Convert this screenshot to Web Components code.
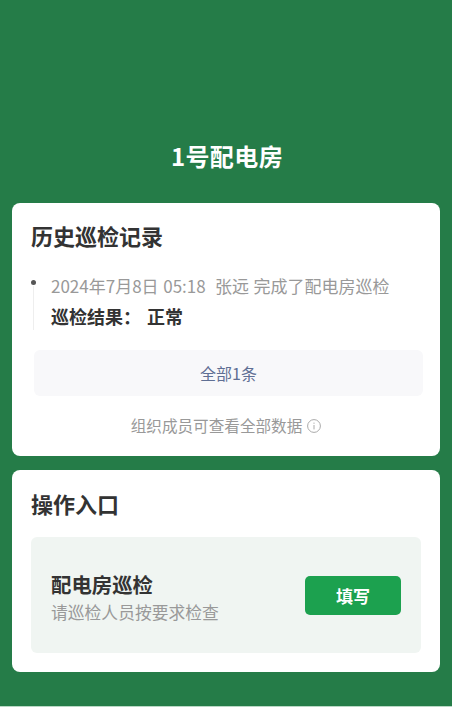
<!DOCTYPE html>
<html lang="zh">
<head>
<meta charset="utf-8">
<title>1号配电房</title>
<style>
  html { background: #fff; }
  body {
    margin: 0;
    font-family: "Noto Sans CJK SC", "Noto Sans", sans-serif;
  }
</style>
</head>
<body>
<room-page heading="1号配电房">
  <info-card heading="历史巡检记录">
    <patrol-record
      meta="2024年7月8日 05:18&nbsp; 张远 完成了配电房巡检"
      label="巡检结果："
      result="正常"></patrol-record>
    <more-button>全部1条</more-button>
    <scope-note>组织成员可查看全部数据</scope-note>
  </info-card>
  <info-card heading="操作入口" compact>
    <action-entry heading="配电房巡检" hint="请巡检人员按要求检查" action="填写"></action-entry>
  </info-card>
</room-page>

<script>
  class RoomPage extends HTMLElement {
    constructor() {
      super();
      this.shadow = this.attachShadow({ mode: "open" });
      this.shadow.innerHTML = `<style>
        :host { display: block; height: 706px; box-sizing: border-box; background: #257c48; padding: 0 12px; overflow: hidden; border-bottom: 1px solid #b9d8c5; height: 707px; }
        h1 { margin: 0; padding: 140px 0 0 2px; height: 63px; font-size: 24px; line-height: 32px; font-weight: 700; letter-spacing: .4px; color: #fff; text-align: center; }
        .cards { display: flex; flex-direction: column; gap: 14px; }
      </style><h1></h1><div class="cards"><slot></slot></div>`;
      this.shadow.querySelector("h1").textContent = this.getAttribute("heading");
    }
  }
  customElements.define("room-page", RoomPage);

  class InfoCard extends HTMLElement {
    constructor() {
      super();
      this.shadow = this.attachShadow({ mode: "open" });
      this.shadow.innerHTML = `<style>
        :host { display: block; background: #fff; border-radius: 8px; padding: 17px 19px; }
        :host([compact]) { padding: 18px 19px 19px; }
        h2 { margin: 0 0 22px; font-size: 22px; line-height: 30px; font-weight: 700; color: #333; }
        :host([compact]) h2 { margin-bottom: 19px; }
      </style><h2></h2><slot></slot>`;
      this.shadow.querySelector("h2").textContent = this.getAttribute("heading");
    }
  }
  customElements.define("info-card", InfoCard);

  class PatrolRecord extends HTMLElement {
    constructor() {
      super();
      this.shadow = this.attachShadow({ mode: "open" });
      this.shadow.innerHTML = `<style>
        :host { display: grid; grid-template-columns: 20px 1fr; height: 78px; }
        .rail { position: relative; }
        .rail::before { content: ""; position: absolute; left: 2px; top: 14px; width: 1px; height: 44px; background: #eee; }
        .rail::after { content: ""; position: absolute; left: 0; top: 8px; width: 5px; height: 5px; border-radius: 50%; background: #555; }
        .meta { font-size: 17px; line-height: 30px; word-spacing: .8px; color: #999; white-space: nowrap; margin-top: -1px; }
        .res { display: flex; gap: 6px; font-size: 18px; line-height: 30px; font-weight: 700; color: #333; }
      </style><div class="rail"></div><div><div class="meta"></div><div class="res"><span></span><span></span></div></div>`;
      this.shadow.querySelector(".meta").textContent = this.getAttribute("meta");
      const [label, result] = this.shadow.querySelectorAll(".res span");
      label.textContent = this.getAttribute("label");
      result.textContent = this.getAttribute("result");
    }
  }
  customElements.define("patrol-record", PatrolRecord);

  class MoreButton extends HTMLElement {
    constructor() {
      super();
      this.shadow = this.attachShadow({ mode: "open" });
      this.shadow.innerHTML = `<style>
        :host { display: flex; align-items: center; justify-content: center; margin: 0 -2px 0 3px; height: 46px; background: #f8f8fa; border-radius: 6px; font-size: 16px; color: #5f6f94; }
      </style><slot></slot>`;
    }
  }
  customElements.define("more-button", MoreButton);

  class ScopeNote extends HTMLElement {
    constructor() {
      super();
      this.shadow = this.attachShadow({ mode: "open" });
      this.shadow.innerHTML = `<style>
        :host { display: flex; align-items: center; justify-content: center; gap: 5px; margin-top: 15px; height: 28px; font-size: 15.6px; color: #999; }
        svg { width: 14px; height: 14px; margin-top: 1px; }
      </style><slot></slot>
      <svg viewBox="0 0 14 14" fill="none" stroke="#aaa" stroke-width="1">
        <circle cx="7" cy="7" r="6.4"/><path d="M7 6v4.4"/><path d="M7 3.6v1.2"/>
      </svg>`;
    }
  }
  customElements.define("scope-note", ScopeNote);

  class ActionEntry extends HTMLElement {
    constructor() {
      super();
      this.shadow = this.attachShadow({ mode: "open" });
      this.shadow.innerHTML = `<style>
        :host { display: flex; align-items: center; justify-content: space-between; height: 116px; padding: 0 20px; background: #f0f5f2; border-radius: 6px; }
        .text { padding-top: 7px; }
        .name { font-size: 20.4px; line-height: 28px; font-weight: 700; color: #333; }
        .hint { font-size: 16.8px; line-height: 29px; color: #999; }
        button { width: 96px; height: 39px; padding: 0; border: 0; border-radius: 5px; background: #1ca14f; color: #fff; font: 700 17px "Noto Sans CJK SC", "Noto Sans", sans-serif; }
      </style><div class="text"><div class="name"></div><div class="hint"></div></div><button></button>`;
      this.shadow.querySelector(".name").textContent = this.getAttribute("heading");
      this.shadow.querySelector(".hint").textContent = this.getAttribute("hint");
      this.shadow.querySelector("button").textContent = this.getAttribute("action");
    }
  }
  customElements.define("action-entry", ActionEntry);
</script>
</body>
</html>
